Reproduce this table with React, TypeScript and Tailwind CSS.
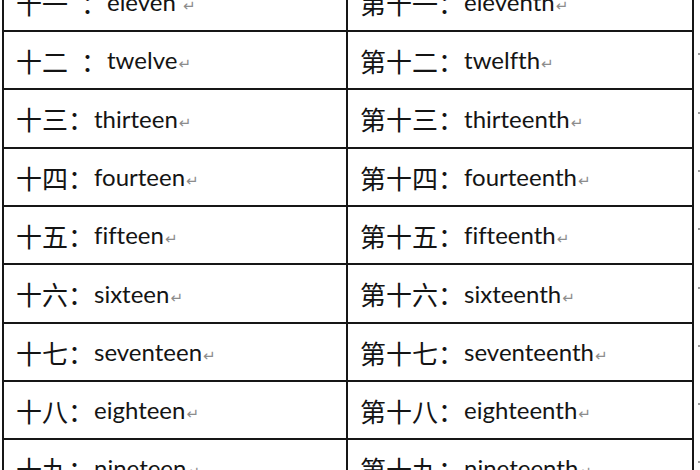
const rows = [
  { h: 'h-[58px]', lc: '十一\u2002：', le: 'eleven ', rc: '第十一：', re: 'eleventh' },
  { h: 'h-[58px]', lc: '十二\u2002：', le: 'twelve', rc: '第十二：', re: 'twelfth' },
  { h: 'h-[59px]', lc: '十三：', le: 'thirteen', rc: '第十三：', re: 'thirteenth' },
  { h: 'h-[58px]', lc: '十四：', le: 'fourteen', rc: '第十四：', re: 'fourteenth' },
  { h: 'h-[58px]', lc: '十五：', le: 'fifteen', rc: '第十五：', re: 'fifteenth' },
  { h: 'h-[59px]', lc: '十六：', le: 'sixteen', rc: '第十六：', re: 'sixteenth' },
  { h: 'h-[58px]', lc: '十七：', le: 'seventeen', rc: '第十七：', re: 'seventeenth' },
  { h: 'h-[58px]', lc: '十八：', le: 'eighteen', rc: '第十八：', re: 'eighteenth' },
  { h: 'h-[58px]', lc: '十九：', le: 'nineteen', rc: '第十九：', re: 'nineteenth' },
]

const Mark = () => (
  <span className="ml-[1px] text-[15px] text-[#8c8c8c] font-['DejaVu_Sans',sans-serif] self-end mb-[13px]">
    ↵
  </span>
)

const Cell = ({ cjk, latin }: { cjk: string; latin: string }) => (
  <>
    <span className="text-[26px] font-['Noto_Sans_CJK_SC',sans-serif]">{cjk}</span>
    <span className="text-[24px] [font-variant-ligatures:none]">{latin}</span>
    <Mark />
  </>
)

const App = () => {
  return (
    <div className="w-[700px] h-[470px] overflow-hidden bg-white">
      <div className="mt-[-26px] ml-[2px] font-['Lato','Noto_Sans_CJK_SC',sans-serif] text-[#141414]">
        {rows.map((r) => (
          <div key={r.lc} className={`flex ${r.h}`}>
            <div className="w-[347px] flex items-center pl-[12px] border-l-2 border-r-2 border-b-2 border-[#161616] whitespace-pre">
              <Cell cjk={r.lc} latin={r.le} />
            </div>
            <div className="w-[347px] flex items-center pl-[12px] border-r-2 border-b-2 border-[#161616] whitespace-pre">
              <Cell cjk={r.rc} latin={r.re} />
            </div>
            <div className="w-[6px] flex items-center justify-end">
              <span className="w-[2px] h-[2px] bg-[#9a9a9a] mb-[14px]" />
            </div>
          </div>
        ))}
      </div>
    </div>
  )
}

export default App
